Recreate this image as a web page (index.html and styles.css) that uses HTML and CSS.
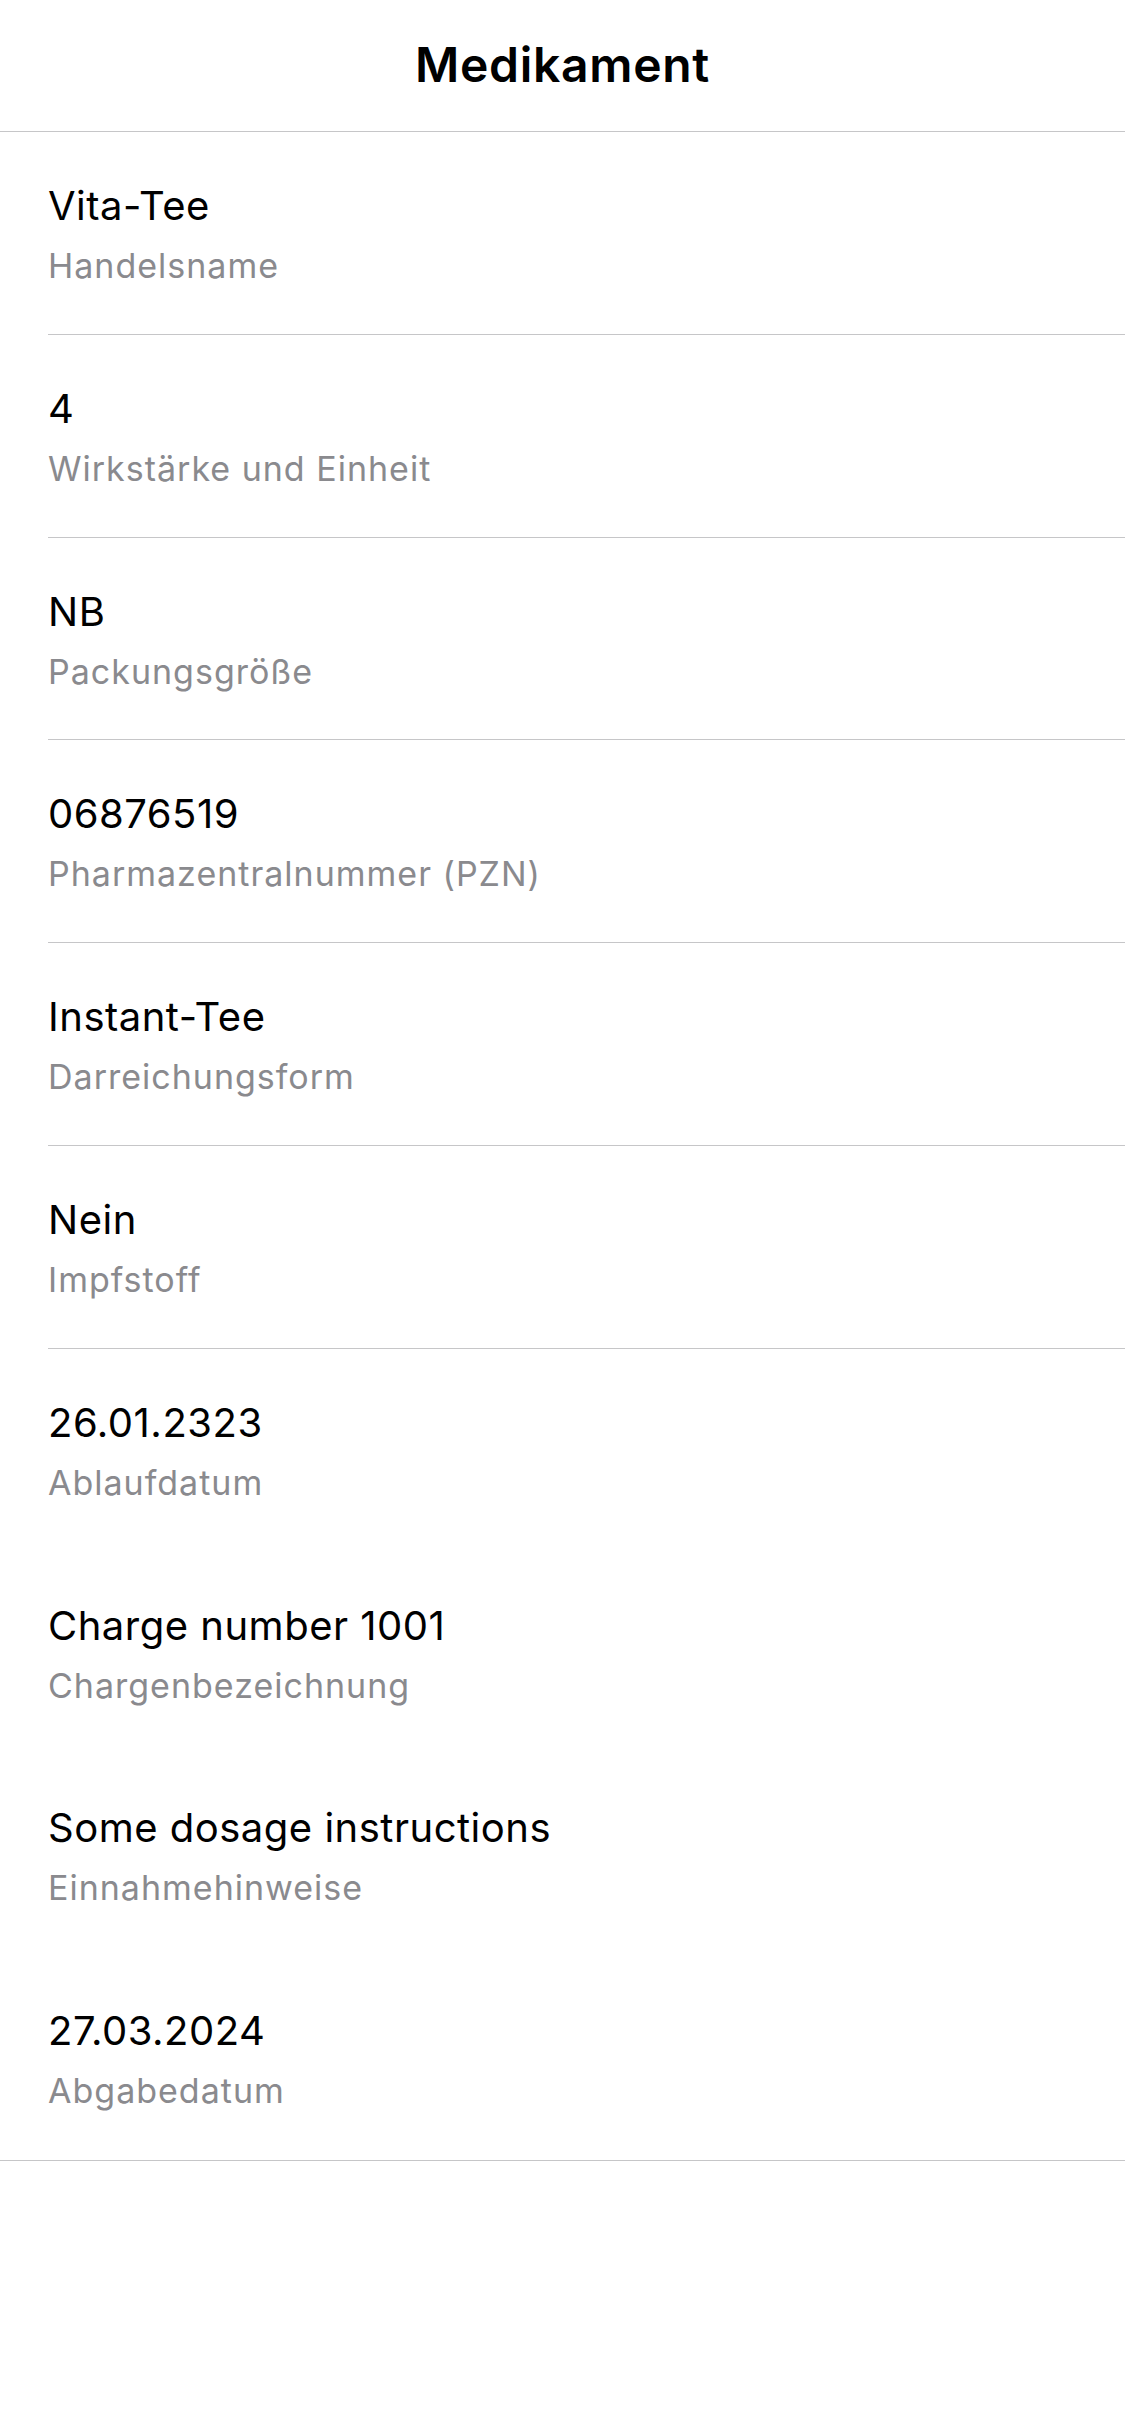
FILE: index.html
```html
<!DOCTYPE html>
<html lang="de">
<head>
<meta charset="utf-8">
<title>Medikament</title>
<link rel="stylesheet" href="styles.css">
</head>
<body>
<div class="screen">
  <header class="nav">
    <h1 class="nav-title">Medikament</h1>
  </header>
  <main class="list">
    <div class="row sep">
      <div class="value">Vita-Tee</div>
      <div class="label">Handelsname</div>
    </div>
    <div class="row sep">
      <div class="value">4</div>
      <div class="label">Wirkstärke und Einheit</div>
    </div>
    <div class="row sep">
      <div class="value">NB</div>
      <div class="label">Packungsgröße</div>
    </div>
    <div class="row sep">
      <div class="value">06876519</div>
      <div class="label">Pharmazentralnummer (PZN)</div>
    </div>
    <div class="row sep">
      <div class="value">Instant-Tee</div>
      <div class="label">Darreichungsform</div>
    </div>
    <div class="row sep">
      <div class="value">Nein</div>
      <div class="label">Impfstoff</div>
    </div>
    <div class="row">
      <div class="value">26.01.2323</div>
      <div class="label">Ablaufdatum</div>
    </div>
    <div class="row">
      <div class="value">Charge number 1001</div>
      <div class="label">Chargenbezeichnung</div>
    </div>
    <div class="row">
      <div class="value">Some dosage instructions</div>
      <div class="label">Einnahmehinweise</div>
    </div>
    <div class="row">
      <div class="value">27.03.2024</div>
      <div class="label">Abgabedatum</div>
    </div>
  </main>
</div>
</body>
</html>
```
FILE: styles.css
```css
* { box-sizing: border-box; }
html, body {
  margin: 0;
  padding: 0;
  background: #ffffff;
}
body {
  font-family: Inter, "Noto Sans", "Liberation Sans", sans-serif;
  color: #000000;
  -webkit-font-smoothing: antialiased;
}
.screen {
  width: 1125px;
  min-height: 2436px;
  background: #ffffff;
}
.nav {
  height: 132px;
  border-bottom: 1px solid #c6c6c8;
  display: flex;
  justify-content: center;
}
.nav-title {
  margin: 0;
  padding-top: 37px;
  font-size: 48px;
  line-height: 56px;
  font-weight: 600;
  letter-spacing: 0.7px;
}
.list {
  border-bottom: 1px solid #c6c6c8;
}
.row {
  height: 202.8px;
  padding: 50px 0 0 48px;
  display: flex;
  flex-direction: column;
  position: relative;
}
.row.sep::after {
  content: "";
  position: absolute;
  left: 48px;
  right: 0;
  bottom: 0;
  height: 1px;
  background: #c6c6c8;
}
.value {
  font-size: 40px;
  line-height: 48px;
  font-weight: 400;
  color: #000000;
  letter-spacing: 0.5px;
}
.label {
  margin-top: 16px;
  font-size: 34px;
  line-height: 40px;
  font-weight: 400;
  color: #8a8a8e;
  letter-spacing: 1px;
}
```
